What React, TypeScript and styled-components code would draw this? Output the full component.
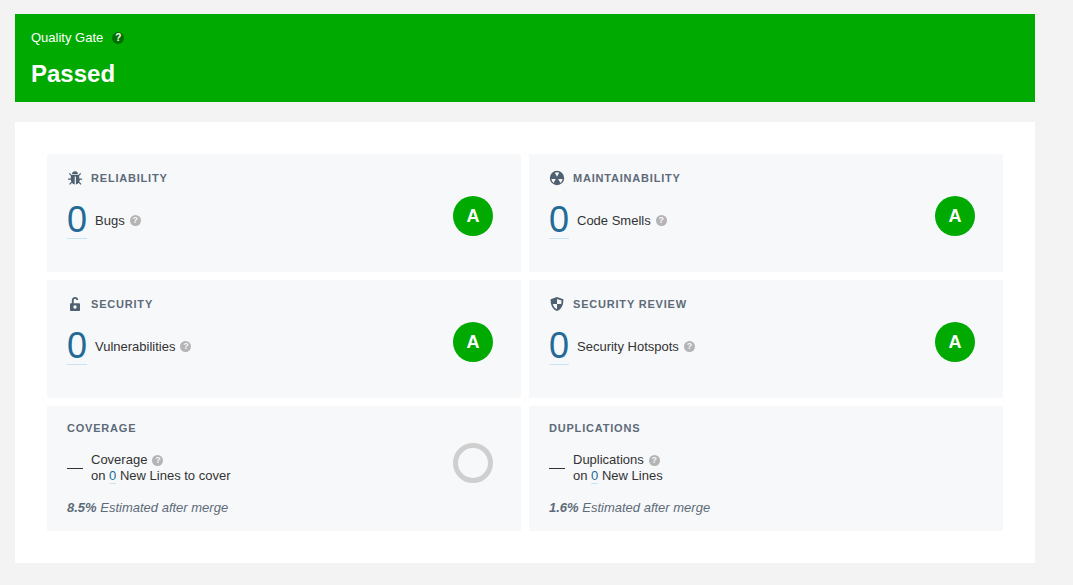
import * as React from 'react'
import styled, { createGlobalStyle } from 'styled-components'

const GlobalStyle = createGlobalStyle`
  html, body {
    margin: 0;
    padding: 0;
    background: #f3f3f3;
    font-family: "Liberation Sans", Arial, sans-serif;
    color: #333;
  }
`

const Page = styled.div`
  width: 1020px;
  padding: 14px 0 0 15px;
  height: 571px;
  overflow: hidden;
`

const GateBanner = styled.div`
  height: 88px;
  box-sizing: border-box;
  padding: 16px 16px 0;
  background: #00aa00;
  color: #fff;
`

const GateLabel = styled.div`
  display: flex;
  align-items: center;
  height: 16px;
  font-size: 13px;
  line-height: 16px;
`

const GateHelp = styled.span`
  display: flex;
  align-items: center;
  justify-content: center;
  width: 12px;
  height: 12px;
  margin-left: 9px;
  border-radius: 50%;
  background: #006f00;
  color: #fff;
  font-size: 10px;
  font-weight: bold;
  line-height: 12px;
`

const GateStatus = styled.div`
  margin-top: 14px;
  font-size: 24px;
  font-weight: bold;
  line-height: 28px;
`

const Panel = styled.div`
  margin-top: 20px;
  height: 441px;
  box-sizing: border-box;
  padding: 32px;
  background: #fff;
`

const Grid = styled.div`
  display: grid;
  grid-template-columns: 474px 474px;
  grid-template-rows: 118px 118px 125px;
  gap: 8px;
`

const Card = styled.div<{ $compact?: boolean }>`
  display: flex;
  justify-content: space-between;
  box-sizing: border-box;
  padding: ${p => (p.$compact ? '14px' : '16px')} 28px 0 20px;
  background: #f7f8fa;
`

const CardMain = styled.div`
  display: flex;
  flex-direction: column;
  min-width: 0;
`

const CardTitle = styled.div`
  display: flex;
  align-items: center;
  height: 16px;
  color: #5d6b78;
  font-size: 11px;
  font-weight: bold;
  letter-spacing: 0.8px;
  line-height: 16px;
  text-transform: uppercase;
`

const TitleIcon = styled.svg`
  width: 16px;
  height: 16px;
  margin-right: 8px;
  fill: #4f6070;
  flex: none;
`

const MetricRow = styled.div`
  display: flex;
  align-items: center;
  margin-top: 16px;
`

const BigValue = styled.span`
  display: block;
  width: 20px;
  height: 37px;
  box-sizing: border-box;
  border-bottom: 1px solid #cae3f2;
  color: #236a97;
  font-size: 36px;
  line-height: 36px;
`

const MetricLabel = styled.span`
  display: flex;
  align-items: center;
  margin-left: 8px;
  color: #333;
  font-size: 13px;
  line-height: 16px;
`

const Help = styled.span`
  display: flex;
  align-items: center;
  justify-content: center;
  width: 11px;
  height: 11px;
  margin-left: 5px;
  border-radius: 50%;
  background: #b4b4b4;
  color: #f7f8fa;
  font-size: 9px;
  font-weight: bold;
  line-height: 11px;
`

const Rating = styled.div`
  display: flex;
  align-items: center;
  justify-content: center;
  width: 40px;
  height: 40px;
  margin-top: 26px;
  border-radius: 50%;
  background: #00aa00;
  color: #fff;
  font-size: 18px;
  font-weight: bold;
`

const EmptyRating = styled.div`
  width: 40px;
  height: 40px;
  box-sizing: border-box;
  margin-top: 23px;
  border: 5px solid #cfcfcf;
  border-radius: 50%;
`

const PercentRow = styled.div`
  display: flex;
  align-items: center;
  margin-top: 16px;
`

const NoValue = styled.span`
  display: block;
  width: 16px;
  height: 1px;
  background: #333;
  flex: none;
`

const PercentText = styled.div`
  margin-left: 8px;
  font-size: 13px;
  line-height: 16px;
`

const PercentLabel = styled.div`
  display: flex;
  align-items: center;
`

const LinkValue = styled.span`
  color: #236a97;
  border-bottom: 1px solid #cae3f2;
`

const Estimate = styled.div`
  margin-top: 16px;
  color: #5d6b78;
  font-size: 13px;
  font-style: italic;
  line-height: 16px;

  b {
    font-weight: bold;
  }
`

const BugIcon = () => (
  <TitleIcon viewBox='0 0 16 16'>
    <path d='M15 8.600h-2.800V5.800l2-2-.9-.9-2 2H4.700l-2-2-.9.900 2 2v2.800H1v1.200h2.800c0 .7.200 1.300.5 1.900l-2.200 2.200.9.900 2-2c.8 1 1.800 1.500 2.700 1.600V6.400h1.200v8c.9-.1 1.900-.6 2.700-1.600l2 2 .9-.9-2.200-2.200c.3-.6.500-1.200.5-1.900H15V8.600zM11 4.200H5c0-1.800 1.300-3 3-3s3 1.200 3 3z' />
  </TitleIcon>
)

const SmellIcon = () => (
  <TitleIcon viewBox='0 0 16 16'>
    <path
      fillRule='evenodd'
      d='M8 .8a7.200 7.200 0 1 1 0 14.400A7.200 7.200 0 0 1 8 .8zM5.800 2.800L8 6.700l2.200-3.900a5.600 5.600 0 0 0-4.400 0zM2.400 9.100h4.400L4.500 13a5.600 5.600 0 0 1-2.100-3.900zM13.600 9.100H9.200l2.300 3.900a5.600 5.600 0 0 0 2.100-3.900z'
    />
  </TitleIcon>
)

const LockIcon = () => (
  <TitleIcon viewBox='0 0 16 16'>
    <path
      fillRule='evenodd'
      d='M3.800 7.200h1V4.400C4.800 2.400 6.100 1 8 1c1.800 0 3.100 1.200 3.200 3h-1.900C9.200 3.300 8.700 2.800 8 2.800c-.9 0-1.300.7-1.300 1.700v2.700h5.500c.5 0 .8.300.8.800v6.200c0 .5-.3.800-.8.800H3.800c-.5 0-.8-.3-.8-.8V8c0-.5.300-.8.800-.8zM8 9.300a1.700 1.700 0 1 0 0 3.400 1.700 1.700 0 0 0 0-3.400z'
    />
  </TitleIcon>
)

const ShieldIcon = () => (
  <TitleIcon viewBox='0 0 16 16'>
    <path
      fillRule='evenodd'
      d='M8 1l6.400 2.200c0 5.600-1.600 9.800-6.400 11.800C3.200 13 1.600 8.800 1.600 3.200L8 1zM8 3v5H3.800c.4 2.300 1.600 4 4.200 5.200V8h4.200c.2-.9.300-1.900.3-3.500L8 3z'
    />
  </TitleIcon>
)

interface RatingCardProps {
  title: string
  icon: React.ReactNode
  label: string
}

const RatingCard = ({ title, icon, label }: RatingCardProps) => (
  <Card>
    <CardMain>
      <CardTitle>{icon}{title}</CardTitle>
      <MetricRow>
        <BigValue>0</BigValue>
        <MetricLabel>{label}<Help>?</Help></MetricLabel>
      </MetricRow>
    </CardMain>
    <Rating>A</Rating>
  </Card>
)

interface PercentCardProps {
  title: string
  label: string
  lines: string
  estimate: string
  showRing?: boolean
}

const PercentCard = ({ title, label, lines, estimate, showRing }: PercentCardProps) => (
  <Card $compact>
    <CardMain>
      <CardTitle>{title}</CardTitle>
      <PercentRow>
        <NoValue />
        <PercentText>
          <PercentLabel>{label}<Help>?</Help></PercentLabel>
          <div>on <LinkValue>0</LinkValue> {lines}</div>
        </PercentText>
      </PercentRow>
      <Estimate><b>{estimate}</b> Estimated after merge</Estimate>
    </CardMain>
    {showRing && <EmptyRating />}
  </Card>
)

const App = () => (
  <Page>
    <GlobalStyle />
    <GateBanner>
      <GateLabel>Quality Gate<GateHelp>?</GateHelp></GateLabel>
      <GateStatus>Passed</GateStatus>
    </GateBanner>
    <Panel>
      <Grid>
        <RatingCard title='Reliability' icon={<BugIcon />} label='Bugs' />
        <RatingCard title='Maintainability' icon={<SmellIcon />} label='Code Smells' />
        <RatingCard title='Security' icon={<LockIcon />} label='Vulnerabilities' />
        <RatingCard title='Security Review' icon={<ShieldIcon />} label='Security Hotspots' />
        <PercentCard title='Coverage' label='Coverage' lines='New Lines to cover' estimate='8.5%' showRing />
        <PercentCard title='Duplications' label='Duplications' lines='New Lines' estimate='1.6%' />
      </Grid>
    </Panel>
  </Page>
)

export default App
